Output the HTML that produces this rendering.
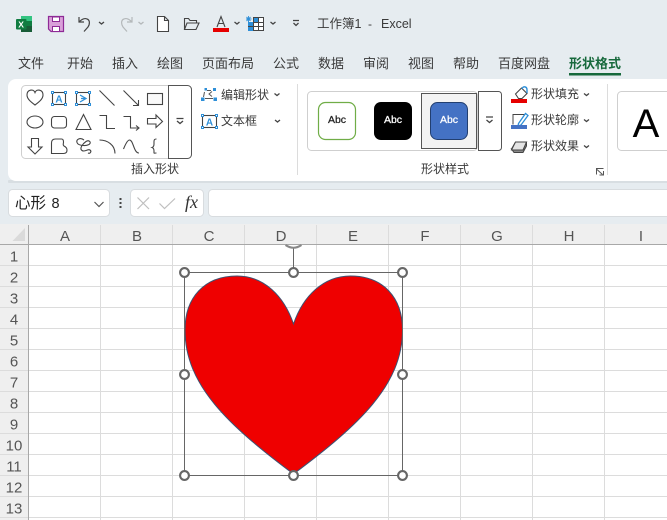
<!DOCTYPE html>
<html lang="zh"><head><meta charset="utf-8"><title>Excel</title>
<style>
html,body{margin:0;padding:0;background:#e6ecf0;width:667px;height:520px;overflow:hidden}
svg{display:block}
text{font-family:"Liberation Sans","Noto Sans CJK SC",sans-serif;fill:#3a3a3a}
.t{font-size:13px}
.r{font-size:12px}
.h{font-size:15px;fill:#555;text-anchor:middle;font-family:"Liberation Sans",sans-serif}
.ic{fill:none;stroke:#444;stroke-width:1.1}
.sel{fill:#fff;stroke:#2e8fd8;stroke-width:1}
.blue{fill:#2e8fd8;font-size:10px;font-weight:bold;text-anchor:middle}
.chev{fill:none;stroke:#444;stroke-width:1.3}
.grid line{stroke:#dcdcdc;stroke-width:1}
.hd{fill:#fff;stroke:#666;stroke-width:2.1}
.abc{font-size:10.5px;text-anchor:middle;stroke-width:.25}
</style></head><body>
<svg width="667" height="520" viewBox="0 0 667 520" xmlns="http://www.w3.org/2000/svg">
<rect width="667" height="520" fill="#e6ecf0"/>

<!-- title bar icons -->
<path d="M21 16h11v16H21z" fill="#21a366"/><path d="M21 16h11v5H21z" fill="#33c481"/><path d="M26 21h6v5h-6z" fill="#107c41"/><path d="M21 26h11v6H21z" fill="#185c37"/>
<rect x="16" y="19" width="10.500" height="10.500" rx="1" fill="#107c41"/>
<text x="18.200" y="27.500" style="font-size:8.500px;font-weight:bold;fill:#fff">X</text>

<path d="M48.500 16.500h15v15h-12.500l-2.500-2.500z" fill="#d9a0d9" stroke="#8e2a96" stroke-width="1.200"/>
<rect x="52.500" y="17" width="7" height="4.500" fill="#fff" stroke="#8e2a96"/>
<rect x="52.500" y="26.500" width="7" height="5" fill="#fff" stroke="#8e2a96"/>

<path d="M79 17v5h5M79 22c3-3 6-4 8-3 3 1 3 5 1 8l-4 4.500" fill="none" stroke="#444" stroke-width="1.200"/>
<path d="M99 22l2.500 2 2.500-2" class="chev"/>
<path d="M132 17v5h-5M132 22c-3-3-6-4-8-3-3 1-3 5-1 8l4 4.500" fill="none" stroke="#b4b8ba" stroke-width="1.200"/>
<path d="M138.500 22l2.500 2 2.500-2" fill="none" stroke="#b4b8ba" stroke-width="1.300"/>

<path d="M157.500 16.500h7l4 4v11h-11zM164.500 16.500v4h4" fill="#fff" stroke="#444" stroke-width="1.100"/>
<path d="M184.500 29.500v-11h4l1.500 2h6.500v2.500M184.500 29.500l2.500-6.500h12l-3 6.500z" fill="none" stroke="#444" stroke-width="1.100"/>

<path d="M217 27l4-10.500 4 10.500M218.500 23.500h5" fill="none" stroke="#444" stroke-width="1.100"/>
<rect x="213" y="28" width="16" height="4" fill="#e60000"/>
<path d="M234.500 22l2.500 2 2.500-2" class="chev"/>

<rect x="248.500" y="17.500" width="15" height="13" fill="#fff" stroke="#444" stroke-width="1"/>
<rect x="248" y="22" width="5.500" height="9" fill="#2e8fd8"/>
<rect x="248" y="15.500" width="5.500" height="6" fill="#e6ecf0"/>
<rect x="253.500" y="18" width="5" height="4.500" fill="#2e8fd8"/>
<path d="M253.500 17v14M258.500 17v14M253 22.500h11M248 26.500h16" stroke="#444" stroke-width="1"/>
<path d="M248.500 16v6M246 19h5.500M246.500 17l4 4M250.500 17l-4 4" stroke="#2e8fd8" stroke-width=".9"/>
<path d="M270.500 22l2.500 2 2.500-2" class="chev"/>

<path d="M293 20.500h6M293.500 23l2.500 2.500 2.500-2.500" class="chev"/>

<text x="317" y="28" style="font-size:12.500px">工作簿1</text>
<text x="368" y="28" style="font-size:12px">-</text>
<text x="381" y="28" style="font-size:12.500px">Excel</text>

<!-- tabs -->
<g class="t">
<text x="18" y="68">文件</text>
<text x="67" y="68">开始</text>
<text x="112" y="68">插入</text>
<text x="157" y="68">绘图</text>
<text x="202" y="68">页面布局</text>
<text x="273" y="68">公式</text>
<text x="318" y="68">数据</text>
<text x="363" y="68">审阅</text>
<text x="408" y="68">视图</text>
<text x="453" y="68">帮助</text>
<text x="498" y="68">百度网盘</text>
<text x="569" y="68" style="font-weight:bold;fill:#17693c">形状格式</text>
</g>
<rect x="569" y="73" width="52" height="2.500" fill="#17693c"/>

<!-- ribbon -->
<rect x="8" y="180" width="680" height="3" rx="1" fill="#d8dee2"/>
<rect x="8" y="79" width="700" height="102" rx="8" fill="#fff"/>

<!-- shape gallery -->
<rect x="21.500" y="85.500" width="170" height="73" rx="4" fill="#fff" stroke="#cfcfcf"/>
<path d="M168.500 85.500h19a4 4 0 0 1 4 4v65a4 4 0 0 1-4 4h-19z" fill="#fff" stroke="#555"/>
<path d="M176.500 118.500h7M177 121l3 2.500 3-2.500" class="chev"/>

<!-- row 1 -->
<path d="M35 105c-4-3-8-6-8-10 0-5.500 6.500-6.500 8-2.500 1.500-4 8-3 8 2.500 0 4-4 7-8 10z" class="ic"/>
<rect x="52.500" y="92.500" width="13" height="12" class="ic"/>
<text x="59" y="102.500" class="blue">A</text>
<g class="sel"><rect x="51.500" y="91.500" width="2" height="2"/><rect x="64.500" y="91.500" width="2" height="2"/><rect x="51.500" y="103.500" width="2" height="2"/><rect x="64.500" y="103.500" width="2" height="2"/></g>
<rect x="76.500" y="92.500" width="13" height="12" class="ic"/>
<path d="M80 95l6 3.500-6 3.500M81 98.500h4" fill="none" stroke="#2e8fd8" stroke-width="1.300"/>
<g class="sel"><rect x="75.500" y="91.500" width="2" height="2"/><rect x="88.500" y="91.500" width="2" height="2"/><rect x="75.500" y="103.500" width="2" height="2"/><rect x="88.500" y="103.500" width="2" height="2"/></g>
<path d="M99.500 90.500l15 15" class="ic"/>
<path d="M123.500 90.500l15 15M133 105.500h5.500v-5.500" class="ic"/>
<rect x="147.500" y="93.500" width="15" height="11" fill="#f9f9f9" stroke="#444" stroke-width="1.100"/>

<!-- row 2 -->
<ellipse cx="35" cy="122" rx="8" ry="6" class="ic"/>
<rect x="51.500" y="116.500" width="15" height="11.500" rx="3" class="ic"/>
<path d="M83.500 114.500l-7.500 15h15z" class="ic"/>
<path d="M99.500 115.500h7v13h8.500" class="ic"/>
<path d="M123.500 116.500h7v11.500h8M136 125.500l3 2.500-3 2.500" class="ic"/>
<path d="M147.500 118.500h8.500v-3.500l6.500 6.500-6.500 6v-3.500h-8.500z" class="ic"/>

<!-- row 3 -->
<path d="M31.500 138.500h7v8.500h3.500l-7 7-7-7h3.500z" class="ic"/>
<path d="M51.500 153.500v-10.500c0-3 2-4 4-4h6c1.500 0 2 1.500 2 3 0 2-1 3 .5 4 2 1 3 2 3 4 0 2.500-1.500 3.500-3.500 3.500z" class="ic"/>
<path d="M84 140c-4-3-8-.5-7 2.500s8 4 12 2c3-2 0-5-3-3s-7 7-4 9 6-2 8-.5 0 4-2 3" class="ic"/>
<path d="M99.500 140c8 0 15.500 5 15.500 13.500" class="ic"/>
<path d="M123.500 149c2-5 4-9 6-9 4 0 4 13 9.500 13" class="ic"/>
<path d="M156.500 139c-3 0-2.500 2-2.500 5 0 2-.5 3-2 3.500 1.500.500 2 1.500 2 3.500 0 3-.500 2 2.500 2" class="ic"/>

<text x="131" y="173" class="r">插入形状</text>

<!-- edit shape -->
<path d="M207 90.500h4M204.500 92l-1 5M212 91.500l-3 2.500 3 2.500M205 98.500h8" fill="none" stroke="#555" stroke-width="1"/>
<g fill="#2e8fd8"><rect x="213" y="88" width="3" height="3"/><rect x="201" y="97.500" width="3.500" height="3.500"/><rect x="213.500" y="97.500" width="3.500" height="3.500"/><rect x="204.500" y="88" width="2.500" height="2.500"/></g>
<text x="221" y="99" class="r">编辑形状</text>
<path d="M274.500 93.500l2.500 2 2.500-2" class="chev"/>
<rect x="202.500" y="115.500" width="14" height="12" class="ic"/>
<text x="209.500" y="125.500" class="blue">A</text>
<g class="sel"><rect x="201.500" y="114.500" width="2" height="2"/><rect x="215.500" y="114.500" width="2" height="2"/><rect x="201.500" y="126.500" width="2" height="2"/><rect x="215.500" y="126.500" width="2" height="2"/></g>
<text x="221" y="125" class="r">文本框</text>
<path d="M275 120l2.500 2 2.500-2" class="chev"/>

<line x1="297.500" y1="84" x2="297.500" y2="175" stroke="#dcdcdc"/>

<!-- shape styles -->
<rect x="307.500" y="91.500" width="170" height="59" rx="4" fill="#fff" stroke="#cfcfcf"/>
<rect x="318.500" y="102.500" width="37" height="37" rx="7" fill="#fff" stroke="#70ad47" stroke-width="1.200"/>
<text x="337" y="123" class="abc" style="fill:#222;stroke:#222">Abc</text>
<rect x="374" y="102" width="38" height="38" rx="7" fill="#000"/>
<text x="393" y="123" class="abc" style="fill:#fff;stroke:#fff">Abc</text>
<rect x="421.500" y="93.500" width="55" height="55" fill="#f3f3f3" stroke="#555"/>
<rect x="430.500" y="102.500" width="37" height="37" rx="7" fill="#4472c4" stroke="#223f70" stroke-width="1"/>
<text x="449" y="123" class="abc" style="fill:#fff;stroke:#fff">Abc</text>
<path d="M478.500 91.500h20a3 3 0 0 1 3 3v53a3 3 0 0 1-3 3h-20z" fill="#fff" stroke="#555"/>
<path d="M486 117h7M486.500 120l3 2.500 3-2.500" class="chev"/>

<!-- fill -->
<path d="M515.500 94l6-6 5.500 5.500-5 5h-3.500z" fill="#fff" stroke="#444" stroke-width="1.100"/>
<path d="M522 89c1-3 5-3 5 1v3" fill="none" stroke="#2e8fd8" stroke-width="1.400"/>
<rect x="511" y="99" width="16" height="4" fill="#e60000"/>
<text x="531" y="98" class="r">形状填充</text>
<path d="M584 93.500l2.500 2 2.500-2" class="chev"/>
<!-- outline -->
<path d="M524.500 114.500h-11.500v10" fill="none" stroke="#444" stroke-width="1"/>
<path d="M518.500 123.500l7-10 2.500 2-7 9.500-3 1z" fill="#fff" stroke="#2e8fd8" stroke-width="1.300"/>
<rect x="511" y="125" width="16" height="4" fill="#4472c4"/>
<text x="531" y="124" class="r">形状轮廓</text>
<path d="M584 119.500l2.500 2 2.500-2" class="chev"/>
<!-- effects -->
<path d="M511.500 149l4-7h11l-3.500 8h-8z" fill="#e4e4e4" stroke="#444"/>
<path d="M523 150l3.500-8v4l-3.500 6.500h-9l-2.500-3.500z" fill="#8a8a8a" stroke="#444"/>
<path d="M515.500 142h11l-3.500 8h-11.500z" fill="#e4e4e4" stroke="#444"/>
<text x="531" y="150" class="r">形状效果</text>
<path d="M584 145.500l2.500 2 2.500-2" class="chev"/>

<text x="421" y="173" class="r">形状样式</text>
<path d="M596.500 174.500v-6h7M597 169.500l5.500 5M603.500 171v4h-4" fill="none" stroke="#555" stroke-width="1"/>
<line x1="607.500" y1="84" x2="607.500" y2="175" stroke="#dcdcdc"/>

<!-- wordart -->
<rect x="617.500" y="91.500" width="70" height="59" rx="4" fill="#fff" stroke="#cfcfcf"/>
<text x="646" y="137" text-anchor="middle" style="font-size:40px;fill:#000">A</text>

<!-- formula bar -->
<rect x="8.500" y="189.500" width="101" height="27" rx="4" fill="#fff" stroke="#d8dcdf"/>
<text x="15" y="208" style="font-size:15.500px;fill:#222">心形</text>
<text x="51.500" y="208" style="font-size:14.500px;fill:#222">8</text>
<path d="M94.500 202l4.500 4.500 4.500-4.500" fill="none" stroke="#555" stroke-width="1.200"/>
<g fill="#444"><rect x="119.500" y="198" width="2" height="2"/><rect x="119.500" y="202" width="2" height="2"/><rect x="119.500" y="206" width="2" height="2"/></g>
<rect x="130.500" y="189.500" width="73" height="27" rx="4" fill="#fff" stroke="#d8dcdf"/>
<path d="M137.500 197.500l11.500 11.500M149 197.500l-11.500 11.500" fill="none" stroke="#bfbfbf" stroke-width="1.200"/>
<path d="M159.500 203.500l5 5 10.500-10" fill="none" stroke="#bfbfbf" stroke-width="1.200"/>
<text x="185" y="208" style="font-family:'Liberation Serif',serif;font-style:italic;font-size:18px;fill:#333">fx</text>
<rect x="208.500" y="189.500" width="480" height="27" rx="4" fill="#fff" stroke="#d8dcdf"/>

<!-- sheet -->
<rect x="0" y="224" width="667" height="296" fill="#fff"/>
<rect x="0" y="224" width="667" height="20" fill="#efefef"/>
<rect x="0" y="244" width="28" height="276" fill="#efefef"/>
<path d="M25 228v13h-12.500z" fill="#dadada"/>
<g class="grid">
<line x1="100.500" y1="225" x2="100.500" y2="520"/><line x1="172.500" y1="225" x2="172.500" y2="520"/><line x1="244.500" y1="225" x2="244.500" y2="520"/><line x1="316.500" y1="225" x2="316.500" y2="520"/><line x1="388.500" y1="225" x2="388.500" y2="520"/><line x1="460.500" y1="225" x2="460.500" y2="520"/><line x1="532.500" y1="225" x2="532.500" y2="520"/><line x1="604.500" y1="225" x2="604.500" y2="520"/>
<line x1="0" y1="265.500" x2="667" y2="265.500"/><line x1="0" y1="286.500" x2="667" y2="286.500"/><line x1="0" y1="307.500" x2="667" y2="307.500"/><line x1="0" y1="328.500" x2="667" y2="328.500"/><line x1="0" y1="349.500" x2="667" y2="349.500"/><line x1="0" y1="370.500" x2="667" y2="370.500"/><line x1="0" y1="391.500" x2="667" y2="391.500"/><line x1="0" y1="412.500" x2="667" y2="412.500"/><line x1="0" y1="433.500" x2="667" y2="433.500"/><line x1="0" y1="454.500" x2="667" y2="454.500"/><line x1="0" y1="475.500" x2="667" y2="475.500"/><line x1="0" y1="496.500" x2="667" y2="496.500"/><line x1="0" y1="517.500" x2="667" y2="517.500"/>
</g>
<line x1="0" y1="244.500" x2="667" y2="244.500" stroke="#a8a8a8"/>
<line x1="28.500" y1="225" x2="28.500" y2="520" stroke="#a8a8a8"/>
<g>
<text x="65" y="241" class="h">A</text><text x="137" y="241" class="h">B</text><text x="209" y="241" class="h">C</text><text x="281" y="241" class="h">D</text><text x="353" y="241" class="h">E</text><text x="425" y="241" class="h">F</text><text x="497" y="241" class="h">G</text><text x="569" y="241" class="h">H</text><text x="641" y="241" class="h">I</text>
<text x="14" y="261.500" class="h">1</text><text x="14" y="282.500" class="h">2</text><text x="14" y="303.500" class="h">3</text><text x="14" y="324.500" class="h">4</text><text x="14" y="345.500" class="h">5</text><text x="14" y="366.500" class="h">6</text><text x="14" y="387.500" class="h">7</text><text x="14" y="408.500" class="h">8</text><text x="14" y="429.500" class="h">9</text><text x="14" y="450.500" class="h">10</text><text x="14" y="471.500" class="h">11</text><text x="14" y="492.500" class="h">12</text><text x="14" y="513.500" class="h">13</text>
</g>

<!-- heart -->
<path d="M293.500 324C284 296 264 276 237 276C204 276 185 298 185 330C185 385 228 425 293.500 474C359 425 402.500 385 402.500 330C402.500 298 383.500 276 350.500 276C323.500 276 303 296 293.500 324Z" fill="#ef0000" stroke="#3f5070" stroke-width="1"/>
<!-- selection -->
<rect x="184.500" y="272.500" width="218" height="203" fill="none" stroke="#666" stroke-width="1"/>
<line x1="293.500" y1="247" x2="293.500" y2="272" stroke="#666"/>
<path d="M285.500 245Q293.500 250.500 301.500 245" fill="none" stroke="#888" stroke-width="2"/>
<circle class="hd" cx="184.500" cy="272.500" r="4.400"/><circle class="hd" cx="293.500" cy="272.500" r="4.400"/><circle class="hd" cx="402.500" cy="272.500" r="4.400"/>
<circle class="hd" cx="184.500" cy="374.500" r="4.400"/><circle class="hd" cx="402.500" cy="374.500" r="4.400"/>
<circle class="hd" cx="184.500" cy="475.500" r="4.400"/><circle class="hd" cx="293.500" cy="475.500" r="4.400"/><circle class="hd" cx="402.500" cy="475.500" r="4.400"/>
</svg>
</body></html>
